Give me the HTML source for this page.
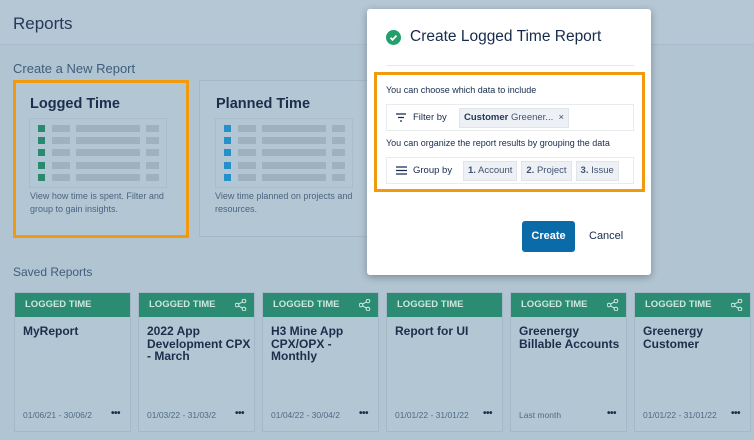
<html><head><style>
body{margin:0;width:754px;height:440px;overflow:hidden;background:#b1c4d2;font-family:"Liberation Sans",sans-serif;position:relative;color:#1b2e4b}
.a{position:absolute}
.hdr{left:0;top:0;width:754px;height:44px;background:#b5c7d4;border-bottom:1px solid #a9bccb}
.card{border:1px solid #a4b8c7;background:#b3c6d4}
.row{position:absolute;left:8px;height:7px}
.sq{position:absolute;left:0;width:7px;height:7px}
.b1{position:absolute;left:14px;width:18px;height:7px;background:#9fb1bf}
.b2{position:absolute;left:38px;width:64px;height:7px;background:#9fb1bf}
.b3{position:absolute;left:108px;width:13px;height:7px;background:#9fb1bf}
.sr{top:292px;width:115px;height:138px;overflow:hidden}
.sr .h{height:24px;background:#2b8c73;color:#cfe6dd;font-size:9.5px;font-weight:bold;line-height:24px;padding-left:10px;position:relative}
.sr .h svg{position:absolute;right:7px;top:6px}
.sr .t{font-size:12px;font-weight:bold;padding:8px 0 0 8px;line-height:12.5px;color:#1b2e4b;white-space:nowrap}
.sr .d{position:absolute;left:8px;top:117px;font-size:8.5px;color:#506a85}
.sr .m{position:absolute;right:10px;top:115px;font-size:10px;font-weight:bold;letter-spacing:-0.5px}
.chip{display:inline-block;background:#edf1f5;border:1px solid #dfe5eb;padding:0 4px;height:18px;line-height:18px;font-size:9.5px;color:#42526e;margin-right:4px}
</style></head><body>
<div class="a hdr"></div>
<div class="a" style="left:13px;top:14px;font-size:17px;color:#233a58">Reports</div>
<div class="a" style="left:13px;top:61px;font-size:13px;color:#3f5d7c">Create a New Report</div>
<div class="a card" style="left:199px;top:80px;width:168px;height:155px"></div>
<div class="a card" style="left:13px;top:80px;width:170px;height:152px;border:3px solid #f29a0e;background:#b3c6d4"></div>
<div class="a" style="left:30px;top:96px;font-size:14.5px;font-weight:bold">Logged Time</div>
<div class="a" style="left:216px;top:96px;font-size:14.5px;font-weight:bold">Planned Time</div>
<div class="a" style="left:29px;top:118px;width:136px;height:68px;border:1px solid #a9bcca">
 <div class="row" style="top:6px"><div class="sq" style="background:#2a8a6d"></div><div class="b1"></div><div class="b2"></div><div class="b3"></div></div>
 <div class="row" style="top:18px"><div class="sq" style="background:#2a8a6d"></div><div class="b1"></div><div class="b2"></div><div class="b3"></div></div>
 <div class="row" style="top:30px"><div class="sq" style="background:#2a8a6d"></div><div class="b1"></div><div class="b2"></div><div class="b3"></div></div>
 <div class="row" style="top:43px"><div class="sq" style="background:#2a8a6d"></div><div class="b1"></div><div class="b2"></div><div class="b3"></div></div>
 <div class="row" style="top:55px"><div class="sq" style="background:#2a8a6d"></div><div class="b1"></div><div class="b2"></div><div class="b3"></div></div>
</div>
<div class="a" style="left:215px;top:118px;width:136px;height:68px;border:1px solid #a9bcca">
 <div class="row" style="top:6px"><div class="sq" style="background:#2590c9"></div><div class="b1"></div><div class="b2"></div><div class="b3"></div></div>
 <div class="row" style="top:18px"><div class="sq" style="background:#2590c9"></div><div class="b1"></div><div class="b2"></div><div class="b3"></div></div>
 <div class="row" style="top:30px"><div class="sq" style="background:#2590c9"></div><div class="b1"></div><div class="b2"></div><div class="b3"></div></div>
 <div class="row" style="top:43px"><div class="sq" style="background:#2590c9"></div><div class="b1"></div><div class="b2"></div><div class="b3"></div></div>
 <div class="row" style="top:55px"><div class="sq" style="background:#2590c9"></div><div class="b1"></div><div class="b2"></div><div class="b3"></div></div>
</div>
<div class="a" style="left:30px;top:190px;font-size:9px;line-height:13px;color:#4a6480;width:150px">View how time is spent. Filter and group to gain insights.</div>
<div class="a" style="left:215px;top:190px;font-size:9px;line-height:13px;color:#4a6480;width:150px">View time planned on projects and resources.</div>
<div class="a" style="left:13px;top:265px;font-size:12px;color:#3f5d7c">Saved Reports</div>

<svg width="0" height="0" style="position:absolute"><defs><g id="sh"><circle cx="9" cy="2" r="1.8" fill="none" stroke="#d6ebe3" stroke-width="1"/><circle cx="2" cy="6" r="1.8" fill="none" stroke="#d6ebe3" stroke-width="1"/><circle cx="9" cy="10" r="1.8" fill="none" stroke="#d6ebe3" stroke-width="1"/><path d="M3.6 5.1L7.4 2.9M3.6 6.9L7.4 9.1" stroke="#d6ebe3" stroke-width="1"/></g></defs></svg>
<div class="a card sr" style="left:14px"><div class="h">LOGGED TIME</div><div class="t">MyReport</div><div class="d">01/06/21 - 30/06/2</div><div class="m">•••</div></div>
<div class="a card sr" style="left:138px"><div class="h">LOGGED TIME<svg width="12" height="12"><use href="#sh"/></svg></div><div class="t">2022 App<br>Development CPX<br>- March</div><div class="d">01/03/22 - 31/03/2</div><div class="m">•••</div></div>
<div class="a card sr" style="left:262px"><div class="h">LOGGED TIME<svg width="12" height="12"><use href="#sh"/></svg></div><div class="t">H3 Mine App<br>CPX/OPX -<br>Monthly</div><div class="d">01/04/22 - 30/04/2</div><div class="m">•••</div></div>
<div class="a card sr" style="left:386px"><div class="h">LOGGED TIME</div><div class="t">Report for UI</div><div class="d">01/01/22 - 31/01/22</div><div class="m">•••</div></div>
<div class="a card sr" style="left:510px"><div class="h">LOGGED TIME<svg width="12" height="12"><use href="#sh"/></svg></div><div class="t">Greenergy<br>Billable Accounts</div><div class="d">Last month</div><div class="m">•••</div></div>
<div class="a card sr" style="left:634px"><div class="h">LOGGED TIME<svg width="12" height="12"><use href="#sh"/></svg></div><div class="t">Greenergy<br>Customer</div><div class="d">01/01/22 - 31/01/22</div><div class="m">•••</div></div>

<div class="a" style="left:367px;top:9px;width:284px;height:266px;background:#fff;border-radius:3px;box-shadow:0 2px 8px rgba(0,0,0,.3)">
 <div class="a" style="left:19px;top:21px;width:15px;height:15px;border-radius:50%;background:#22a06b"><svg width="15" height="15"><path d="M4.5 7.8l2 2 4-4.2" stroke="#fff" stroke-width="1.8" fill="none"/></svg></div>
 <div class="a" style="left:43px;top:19px;font-size:15.5px;color:#172b4d">Create Logged Time Report</div>
 <div class="a" style="left:19px;top:56px;width:248px;height:1px;background:#e4e8ec"></div>
 <div class="a" style="left:7px;top:63px;width:265px;height:114px;border:3px solid #f29a0e"></div>
 <div class="a" style="left:19px;top:76px;font-size:9px;color:#172b4d">You can choose which data to include</div>
 <div class="a" style="left:19px;top:95px;width:246px;height:25px;border:1px solid #e8ecf0">
  <svg class="a" style="left:9px;top:8px" width="10" height="9"><path d="M0 1h10M2 4.5h6M4 8h2" stroke="#172b4d" stroke-width="1.3"/></svg>
  <div class="a" style="left:26px;top:7px;font-size:9.5px;color:#172b4d">Filter by</div>
  <div class="a" style="left:72px;top:3px"><span class="chip" style="color:#42526e"><b style="color:#253858">Customer</b> Greener... &nbsp;×</span></div>
 </div>
 <div class="a" style="left:19px;top:129px;font-size:9px;color:#172b4d">You can organize the report results by grouping the data</div>
 <div class="a" style="left:19px;top:148px;width:246px;height:25px;border:1px solid #e8ecf0">
  <svg class="a" style="left:9px;top:8px" width="11" height="9"><path d="M0 1h11M0 4.5h11M0 8h11" stroke="#172b4d" stroke-width="1.3"/></svg>
  <div class="a" style="left:26px;top:7px;font-size:9.5px;color:#172b4d">Group by</div>
  <div class="a" style="left:76px;top:3px;white-space:nowrap"><span class="chip"><b>1.</b> Account</span><span class="chip"><b>2.</b> Project</span><span class="chip"><b>3.</b> Issue</span></div>
 </div>
 <div class="a" style="left:155px;top:212px;width:53px;height:31px;background:#0b6aa8;border-radius:3px;color:#fff;font-size:11px;font-weight:bold;text-align:center;line-height:31px">Create</div>
 <div class="a" style="left:222px;top:221px;font-size:11px;color:#172b4d">Cancel</div>
</div>
</body></html>
